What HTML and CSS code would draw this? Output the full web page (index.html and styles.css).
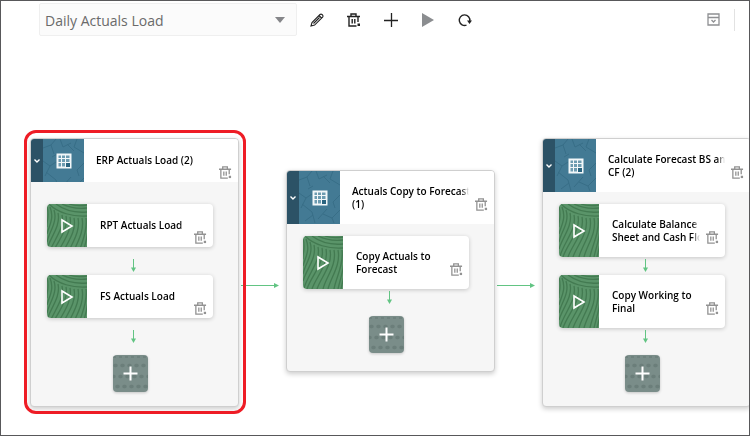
FILE: index.html
```html
<!DOCTYPE html>
<html lang="en">
<head>
  <meta charset="UTF-8">
  <title>Daily Actuals Load</title>
  <link rel="stylesheet" href="styles.css">
</head>
<body>
  <!-- Shared icons and tile textures -->
  <svg class="sprite" aria-hidden="true">
    <symbol id="i-trash" viewBox="0 0 14 14">
      <path d="M0 3.500h13M4 3.500V1h5v2.500M2 3.500V13h7.500M11 3.500V9M5.200 6v4.500M7.800 6v4.500" fill="none" stroke="currentColor" stroke-width="1.400"/>
      <path d="M10.500 10.500h2.500v2.500h-2.500z" fill="currentColor"/>
    </symbol>
    <symbol id="i-calendar" viewBox="0 0 16 16">
      <path d="M1.500 1.500h13v13h-13z" fill="#6c9bb0" stroke="#f2f7f9" stroke-width="2"/>
      <path d="M5.500 2v12M9.500 2v12M2 5.500h12M2 9.500h12" fill="none" stroke="#f2f7f9" stroke-width="1"/>
      <path d="M10 10h4v4h-4z" fill="#2a6480"/>
    </symbol>
    <symbol id="i-run" viewBox="0 0 14 16">
      <path d="M2 2v12L12 8z" fill="none" stroke="#fff" stroke-width="1.600"/>
    </symbol>
    <symbol id="i-down" viewBox="0 0 8 13">
      <path d="M4.500 0v10" stroke="#62c483" stroke-width="1"/>
      <path d="M2 8.500h5L4.500 13z" fill="#62c483"/>
    </symbol>
    <symbol id="i-right" viewBox="0 0 38 6">
      <path d="M0 3.500h35" stroke="#62c483" stroke-width="1"/>
      <path d="M33 1v5l5-2.500z" fill="#62c483"/>
    </symbol>
    <symbol id="i-chevron" viewBox="0 0 8 6">
      <path d="M1.500 1.500L4 4l2.500-2.500" fill="none" stroke="#fff" stroke-width="1.400"/>
    </symbol>
    <symbol id="t-stage" viewBox="0 0 41 53" preserveAspectRatio="xMinYMin slice">
      <path d="M0 9l8-3 5-6M8 6l3 9M17 0l3 8 8-4M24 5l7 7M34 0l-3 8 10 6M0 22l7 5 6-4M7 27l-5 10M3 33l10 8 3 11M14 44l-8 6M28 38l-9 10M24 43l9 4 8-8M33 47l2 5M41 24l-7 7 2 6M14 15l-5 3" fill="none" stroke="#386e87" stroke-width="1"/>
    </symbol>
    <symbol id="t-job" viewBox="0 0 40 53" preserveAspectRatio="xMinYMin slice">
      <path d="M9 0c8 6 20 9 31 8M15 0c8 4 16 5 25 4M22 0c6 2 12 2 18 1M2 0c9 9 24 13 38 12M0 3c3 9-1 16 0 20M3 3c5 12-2 21-3 27M7 6c4 12-5 22-7 32M11 9c3 13-8 25-11 36M15 11c3 14-10 27-14 41M19 12c3 15-11 28-15 41M23 13c3 15-10 28-14 40M27 14c3 15-9 27-13 39M31 14c3 15-8 27-11 39M35 14c3 15-7 27-10 39M39 14c2 15-6 27-8 39M41 26c-1 10-4 18-6 27M41 40l-3 13" fill="none" stroke="#437a51" stroke-width="1.300"/>
    </symbol>
    <symbol id="t-add" viewBox="0 0 35 37">
      <path d="M2 10.500h34M0 21.500h36M4 31.500h32" fill="none" stroke="#6b7e7a" stroke-width="3.500" stroke-linecap="round" stroke-dasharray="1 6"/>
      <path d="M0 2h35" stroke="#6f827e" stroke-width="2" stroke-dasharray="3 3"/>
      <path d="M10.500 18.500h14M17.500 11.500v14" stroke="#fff" stroke-width="2"/>
    </symbol>
  </svg>

  <header class="toolbar">
    <div class="picker">
      <select class="picker-select" aria-label="Pipeline">
        <option>Daily Actuals Load</option>
      </select>
      <svg class="picker-arrow" width="10" height="6" viewBox="0 0 10 6"><path d="M0 0h10L5 6z" fill="#858689"/></svg>
    </div>
    <button class="tool" type="button" aria-label="Edit">
      <svg width="14" height="14" viewBox="0 0 14 14"><path d="M1 13l1-3.500 8-8q1-.8 2 0l.6.6q.8 1 0 2l-8 8zM9 2.500l2.500 2.500M3.500 10.500l6-6" fill="none" stroke="currentColor" stroke-width="1.100"/></svg>
    </button>
    <button class="tool" type="button" aria-label="Delete">
      <svg width="14" height="14"><use href="#i-trash"/></svg>
    </button>
    <button class="tool" type="button" aria-label="Add">
      <svg width="14" height="14" viewBox="0 0 14 14"><path d="M0 7.500h14M7.500 0v14" stroke="currentColor" stroke-width="1.300"/></svg>
    </button>
    <button class="tool" type="button" aria-label="Run">
      <svg width="12" height="14" viewBox="0 0 12 14"><path d="M0 0v14l12-7z" fill="#8b8d90"/></svg>
    </button>
    <button class="tool" type="button" aria-label="Refresh">
      <svg width="14" height="14" viewBox="0 0 14 14"><path d="M8.500 12.100A5.300 5.300 0 1 1 11.800 8" fill="none" stroke="currentColor" stroke-width="1.400"/><path d="M9 7.500h5L11.500 11z" fill="currentColor"/></svg>
    </button>
    <button class="tool tool-panel" type="button" aria-label="Show panel">
      <svg width="13" height="13" viewBox="0 0 13 13"><path d="M1 1h11v11H1zM1 4.500h11" fill="none" stroke="currentColor" stroke-width="1.300"/><path d="M4.500 7l2 2 2-2" fill="none" stroke="currentColor" stroke-width="1.300"/></svg>
    </button>
  </header>

  <main class="canvas">
    <section class="stage selected">
      <div class="stage-top">
        <div class="stage-head">
          <button class="toggle" type="button" aria-label="Collapse"><svg width="8" height="6"><use href="#i-chevron"/></svg></button>
          <div class="tile tile-stage">
            <svg class="texture"><use href="#t-stage"/></svg>
            <svg class="glyph" width="16" height="16"><use href="#i-calendar"/></svg>
          </div>
          <h2 class="title">ERP Actuals Load (2)</h2>
          <button class="remove" type="button" aria-label="Delete stage"><svg width="13" height="13"><use href="#i-trash"/></svg></button>
        </div>
      </div>
      <div class="step">
        <div class="job">
          <div class="tile tile-job">
            <svg class="texture"><use href="#t-job"/></svg>
            <svg class="glyph" width="14" height="16"><use href="#i-run"/></svg>
          </div>
          <h3 class="title">RPT Actuals Load</h3>
          <button class="remove" type="button" aria-label="Delete job"><svg width="13" height="13"><use href="#i-trash"/></svg></button>
        </div>
        <svg class="down" width="8" height="13"><use href="#i-down"/></svg>
      </div>
      <div class="step">
        <div class="job">
          <div class="tile tile-job">
            <svg class="texture"><use href="#t-job"/></svg>
            <svg class="glyph" width="14" height="16"><use href="#i-run"/></svg>
          </div>
          <h3 class="title">FS Actuals Load</h3>
          <button class="remove" type="button" aria-label="Delete job"><svg width="13" height="13"><use href="#i-trash"/></svg></button>
        </div>
        <svg class="down" width="8" height="13"><use href="#i-down"/></svg>
      </div>
      <button class="add" type="button" aria-label="Add job"><svg width="35" height="37"><use href="#t-add"/></svg></button>
    </section>

    <svg class="link" width="38" height="6"><use href="#i-right"/></svg>

    <section class="stage stage-short">
      <div class="stage-top">
        <div class="stage-head tall">
          <button class="toggle" type="button" aria-label="Collapse"><svg width="8" height="6"><use href="#i-chevron"/></svg></button>
          <div class="tile tile-stage">
            <svg class="texture"><use href="#t-stage"/></svg>
            <svg class="glyph" width="16" height="16"><use href="#i-calendar"/></svg>
          </div>
          <h2 class="title">Actuals Copy to Forecast<br>(1)</h2>
          <button class="remove" type="button" aria-label="Delete stage"><svg width="13" height="13"><use href="#i-trash"/></svg></button>
        </div>
      </div>
      <div class="step">
        <div class="job tall">
          <div class="tile tile-job">
            <svg class="texture"><use href="#t-job"/></svg>
            <svg class="glyph" width="14" height="16"><use href="#i-run"/></svg>
          </div>
          <h3 class="title">Copy Actuals to<br>Forecast</h3>
          <button class="remove" type="button" aria-label="Delete job"><svg width="13" height="13"><use href="#i-trash"/></svg></button>
        </div>
        <svg class="down" width="8" height="13"><use href="#i-down"/></svg>
      </div>
      <button class="add" type="button" aria-label="Add job"><svg width="35" height="37"><use href="#t-add"/></svg></button>
    </section>

    <svg class="link" width="38" height="6"><use href="#i-right"/></svg>

    <section class="stage">
      <div class="stage-top">
        <div class="stage-head tall">
          <button class="toggle" type="button" aria-label="Collapse"><svg width="8" height="6"><use href="#i-chevron"/></svg></button>
          <div class="tile tile-stage">
            <svg class="texture"><use href="#t-stage"/></svg>
            <svg class="glyph" width="16" height="16"><use href="#i-calendar"/></svg>
          </div>
          <h2 class="title">Calculate Forecast BS and<br>CF (2)</h2>
          <button class="remove" type="button" aria-label="Delete stage"><svg width="13" height="13"><use href="#i-trash"/></svg></button>
        </div>
      </div>
      <div class="step">
        <div class="job tall">
          <div class="tile tile-job">
            <svg class="texture"><use href="#t-job"/></svg>
            <svg class="glyph" width="14" height="16"><use href="#i-run"/></svg>
          </div>
          <h3 class="title">Calculate Balance<br>Sheet and Cash Flow</h3>
          <button class="remove" type="button" aria-label="Delete job"><svg width="13" height="13"><use href="#i-trash"/></svg></button>
        </div>
        <svg class="down" width="8" height="13"><use href="#i-down"/></svg>
      </div>
      <div class="step">
        <div class="job tall">
          <div class="tile tile-job">
            <svg class="texture"><use href="#t-job"/></svg>
            <svg class="glyph" width="14" height="16"><use href="#i-run"/></svg>
          </div>
          <h3 class="title">Copy Working to<br>Final</h3>
          <button class="remove" type="button" aria-label="Delete job"><svg width="13" height="13"><use href="#i-trash"/></svg></button>
        </div>
        <svg class="down" width="8" height="13"><use href="#i-down"/></svg>
      </div>
      <button class="add" type="button" aria-label="Add job"><svg width="35" height="37"><use href="#t-add"/></svg></button>
    </section>
  </main>
</body>
</html>
```
FILE: styles.css
```css
* {
  box-sizing: border-box;
}
body {
  font-family: "Open Sans", "Noto Sans", sans-serif;
  background: white;
  margin: 0;
  min-height: 100vh;
  border: 1px solid #58585a;
  overflow: hidden;
}
button {
  background: none;
  border: 0;
  padding: 0;
  margin: 0;
  color: inherit;
  cursor: pointer;
}
svg {
  display: block;
  flex: none;
}
.sprite {
  position: absolute;
  width: 0;
  height: 0;
}

/* Toolbar */
.toolbar {
  display: flex;
  align-items: center;
  padding: 2px 14px 0 38px;
  color: #222;
}
.picker {
  display: grid;
  align-items: center;
  width: 258px;
  margin-right: 1px;
}
.picker-select {
  grid-area: 1 / 1;
  appearance: none;
  width: 100%;
  height: 33px;
  padding: 2px 30px 0 5px;
  border: 1px solid #efefef;
  border-radius: 2px;
  background: #fbfbfb;
  color: #6a6a6a;
  font-family: inherit;
  font-size: 14px;
}
.picker-arrow {
  grid-area: 1 / 1;
  justify-self: end;
  margin-right: 12px;
  pointer-events: none;
}
.tool {
  display: flex;
  align-items: center;
  justify-content: center;
  width: 37px;
  height: 22px;
}
.tool-panel {
  width: 43px;
  margin-left: auto;
  border-right: 1px solid #e2e2e2;
  color: #8f9093;
}

/* Pipeline */
.canvas {
  display: flex;
  align-items: flex-start;
  margin-top: 102px;
  padding-left: 29px;
}
.stage {
  position: relative;
  flex: none;
  width: 209px;
  padding-bottom: 14px;
  background: #f6f6f6;
  border: 1px solid #cfcfcf;
  border-radius: 4px;
  box-shadow: 0 2px 5px rgba(0, 0, 0, 0.2);
}
.stage-short {
  margin-top: 32px;
  padding-bottom: 18px;
}
.selected::after {
  content: "";
  position: absolute;
  z-index: 1;
  inset: -9px -8px -8px -7px;
  border: 3px solid #ee1c25;
  border-radius: 12px;
  pointer-events: none;
}
.stage-top {
  height: 65px;
}
.stage-head,
.job {
  display: flex;
  align-items: center;
  height: 43px;
  padding-right: 6px;
  background: white;
}
.stage-head {
  border-radius: 3px 3px 0 0;
}
.stage-head.tall,
.job.tall {
  height: 53px;
}
.toggle {
  display: flex;
  align-items: center;
  justify-content: center;
  align-self: stretch;
  width: 12px;
  background: #2c5266;
  border-radius: 3px 0 0 0;
}
.tile {
  display: grid;
  grid-template-rows: 100%;
  place-items: center;
  align-self: stretch;
  flex: none;
  overflow: hidden;
}
.tile-stage {
  width: 41px;
  background: #437a94;
}
.tile-job {
  width: 40px;
  background: #5a9469;
  border-radius: 4px 0 0 4px;
}
.texture {
  grid-area: 1 / 1;
  width: 100%;
  height: 53px;
  align-self: start;
}
.glyph {
  grid-area: 1 / 1;
}
.title {
  flex: 1;
  margin: 0;
  padding-left: 12px;
  overflow: hidden;
  white-space: nowrap;
  color: #000;
  font-size: 10px;
  font-weight: 600;
  line-height: 13px;
  /* long names fade out before the delete button */
  mask-image: linear-gradient(to left, transparent, black 8px);
}
.remove {
  align-self: flex-start;
  margin-top: 27px;
  margin-left: 6px;
  color: #929292;
}
.step {
  display: flex;
  flex-direction: column;
  justify-content: space-between;
  height: 71px;
  padding: 0 25px 3px 16px;
}
.job {
  border-radius: 4px;
  box-shadow: 0 1px 4px rgba(0, 0, 0, 0.2);
}
.job .title {
  padding-left: 13px;
}
.down {
  align-self: center;
  margin-left: 6px;
}
.add {
  display: block;
  width: 35px;
  margin: 9px 0 0 82px;
  background: #7a8d89;
  border-radius: 4px;
  overflow: hidden;
  box-shadow: 0 1px 3px rgba(0, 0, 0, 0.2);
}
.link {
  margin: 144px 7px 0 2px;
}
```
